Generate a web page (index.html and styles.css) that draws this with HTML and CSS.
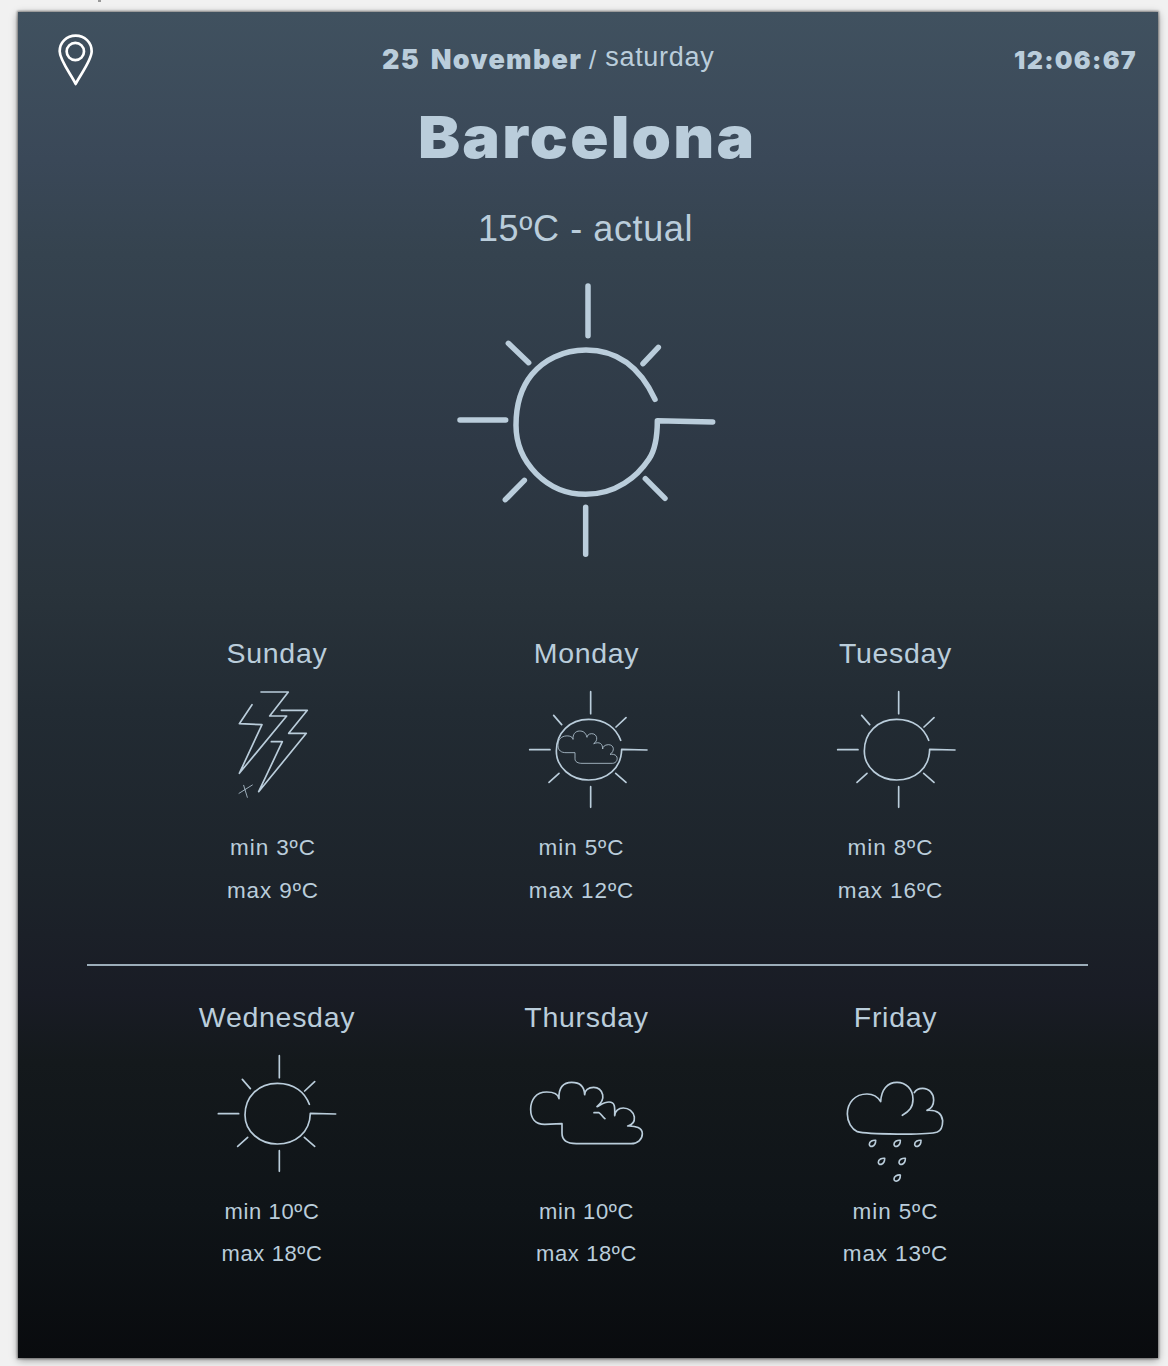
FILE: index.html
```html
<!DOCTYPE html>
<html lang="en">
<head>
<meta charset="utf-8">
<title>Barcelona weather</title>
<link rel="stylesheet" href="styles.css">
</head>
<body>
<div class="tick"></div>
<main class="card">
  <header class="topbar">
    <svg class="pin" viewBox="165 95 120 165">
      <path d="M227 251 C215 225 179 180 179 153 C179 126 200 106 227 106 C254 106 275 126 275 153 C275 180 240 225 227 251 Z"/>
      <circle cx="226" cy="153.500" r="26"/>
    </svg>
    <div class="date"><strong class="heavy day-month">25 November</strong><span class="slash">/</span><span class="weekday">saturday</span></div>
    <time class="heavy clock">12:06:67</time>
  </header>

  <h1 class="heavy city">Barcelona</h1>
  <p class="current">15ºC - actual</p>
  <svg class="sun-large" viewBox="0 0 870 900">
    <path d="M444 48V197M205 220L266 278M655 232L609 281M60 450H197M253 631L196 689M616 626L675 685M437 712V853"/>
    <path d="M645 388C608 308 545 240 438 240C368 240 310 271 276 313C244 352 228 405 228 466C228 576 320 673 437 673C528 673 592 620 627 567C645 540 652 500 652 452L818 456"/>
  </svg>

  <section class="week">
    <article class="day">
      <h2>Sunday</h2>
      <svg class="icon" viewBox="-9 150 420 420">
        <path d="M153 186H235L179 258H230L88 430L156 284L88 281L126 224"/>
        <path d="M214 241H292L236 310H289L146 485L217 335H184"/>
        <path class="fine" d="M87 490L127 465M101 466L112 502"/>
      </svg>
      <div class="temps shift-4"><p>min 3ºC</p><p>max 9ºC</p></div>
    </article>
    <article class="day">
      <h2>Monday</h2>
      <svg class="icon" viewBox="-10 0 420 420">
        <g id="sun">
          <path d="M211 35V101M100 106L124 134M317 113L287 141M28 209H89M116 280L86 307M286 280L317 307M211 320V382"/>
          <path d="M301 181C288 145 256 118 205 118C148 118 108 158 108 213C108 263 153 300 205 300C259 300 303 266 304 208L380 210"/>
        </g>
        <path class="fine" d="M158 177C157 168 140 165 128 170C116 175 113 186 113 196C113 212 123 218 137 218H164V236C164 246 173 250 185 250H276C289 250 294 236 288 228C284 223 276 222 269 223C284 214 282 194 264 194C253 194 247 201 247 207C247 191 238 184 220 191C234 183 232 161 214 161C204 161 200 168 200 172C196 157 188 153 178 153C164 153 157 164 158 177Z"/>
      </svg>
      <div class="temps shift-5"><p>min 5ºC</p><p>max 12ºC</p></div>
    </article>
    <article class="day">
      <h2>Tuesday</h2>
      <svg class="icon" viewBox="-7 0 420 420"><use href="#sun"/></svg>
      <div class="temps shift-5"><p>min 8ºC</p><p>max 16ºC</p></div>
    </article>
  </section>

  <hr class="divider">

  <section class="week second">
    <article class="day">
      <h2>Wednesday</h2>
      <svg class="icon" viewBox="-6 0 420 420"><use href="#sun"/></svg>
      <div class="temps shift-5 tight"><p>min 10ºC</p><p>max 18ºC</p></div>
    </article>
    <article class="day">
      <h2>Thursday</h2>
      <svg class="icon" viewBox="6 132 420 420">
        <path d="M132 296C129 280 115 276 95 276C62 276 47 300 47 328C47 354 60 373 89 373L141 371V400C141 423 158 431 184 431H348C368 431 382 418 382 401C382 384 363 377 338 378C355 374 359 361 358 351C355 334 341 324 325 324C310 324 300 334 299 347C300 320 300 306 282 306C268 306 258 314 246 320C261 308 266 299 263 284C259 269 248 262 236 262C220 262 209 271 209 284C208 256 190 247 170 247C145 247 130 263 132 296Z"/>
        <path d="M237 338H252C259 341 263 352 270 356"/>
      </svg>
      <div class="temps tight"><p>min 10ºC</p><p>max 18ºC</p></div>
    </article>
    <article class="day">
      <h2>Friday</h2>
      <svg class="icon" viewBox="-27 132 420 420">
        <path d="M202 346C223 334 234 322 234 298C234 266 212 247 186 247C157 247 139 269 137 305C128 290 113 282 96 282C60 282 37 308 37 342C37 366 50 387 67 395C95 403 278 406 307 396C319 391 323 376 323 362C321 343 308 329 276 331C291 325 296 312 296 300C296 280 282 265 263 265C252 265 242 270 238 278"/>
        <path id="drop" d="M122 421C114 420 103 424 103 433C103 439 108 440 112 439C119 437 122 432 122 421Z"/>
        <use href="#drop" x="74"/><use href="#drop" x="136"/>
        <use href="#drop" x="27" y="54"/><use href="#drop" x="89" y="54"/>
        <use href="#drop" x="74" y="104"/>
      </svg>
      <div class="temps"><p>min 5ºC</p><p>max 13ºC</p></div>
    </article>
  </section>
</main>
</body>
</html>
```
FILE: styles.css
```css
* { box-sizing: border-box; }
body {
  min-height: 1366px;
  margin: 0;
  background: #f1f1f1;
  color: #bacddb;
  font-family: "Liberation Sans", Arial, sans-serif;
}
h1, h2, p { margin: 0; font-weight: 400; }
svg {
  display: block;
  fill: none;
  stroke: #bacddb;
  stroke-linecap: round;
  stroke-linejoin: round;
}
.tick { width: 3px; height: 2px; margin-left: 98px; background: #999; }
.card {
  width: 1140px;
  height: 1346px;
  margin: 10px 0 0 18px;
  background: linear-gradient(#40515f 0, #3a4858 11%, #35434f 18%, #2e3946 32%, #29333b 43%, #222b33 52%, #1d242b 64%, #191c25 73%, #14191c 78%, #0f1418 89%, #090b0e 100%);
  box-shadow: 0 0 2px 1px rgba(0, 0, 0, .4), 0 2px 8px rgba(0, 0, 0, .4);
}
.heavy { font-family: Inter, "Liberation Sans", sans-serif; font-weight: 900; }
.topbar { display: flex; height: 90px; padding: 20px 21px 0 37px; }
.pin { width: 40px; height: 55px; stroke: #fff; stroke-width: 8; }
.date { display: flex; margin-left: 287px; line-height: 32px; font-size: 26px; white-space: nowrap; }
.day-month { width: 201px; padding-top: 12px; font-size: 27px; letter-spacing: 1.3px; word-spacing: 4px; }
.slash { margin-left: 6px; padding-top: 12px; }
.weekday { margin-left: 9px; padding-top: 9px; font-size: 27px; letter-spacing: .7px; }
.clock { margin-left: auto; padding-top: 12px; font-size: 25px; line-height: 32px; letter-spacing: 1.3px; }
.city {
  width: fit-content;
  height: 104px;
  margin: 0 auto;
  padding-right: 2px;
  font-size: 58px;
  font-weight: 900;
  line-height: 70px;
  letter-spacing: 2px;
  transform: scaleX(1.09);
}
.current { height: 64px; padding-right: 5px; font-size: 36px; line-height: 45px; letter-spacing: .6px; text-align: center; }
.sun-large { width: 290px; height: 300px; margin-left: 422px; stroke-width: 16.5; }
.week { display: grid; grid-template-columns: 310px 309px 309px; margin-left: 104px; }
.sun-large + .week { margin-top: 65px; }
.day { display: flex; flex-direction: column; align-items: center; }
.day h2 { font-size: 28.5px; line-height: 37px; letter-spacing: .7px; }
.icon { width: 140px; height: 140px; margin: 8px 0 6px; stroke-width: 5; }
.fine { stroke-width: 2.4; }
.temps { font-size: 22.5px; line-height: 43px; letter-spacing: .9px; text-align: center; }
.second .temps { line-height: 42.5px; padding-top: .5px; }
.shift-4 { padding-right: 8px; }
.shift-5 { padding-right: 10px; }
.tight { font-size: 22px; letter-spacing: .6px; }
.divider { width: 1001px; height: 2px; margin: 52px 0 33px 69px; border: 0; background: #9cadb9; }
```
